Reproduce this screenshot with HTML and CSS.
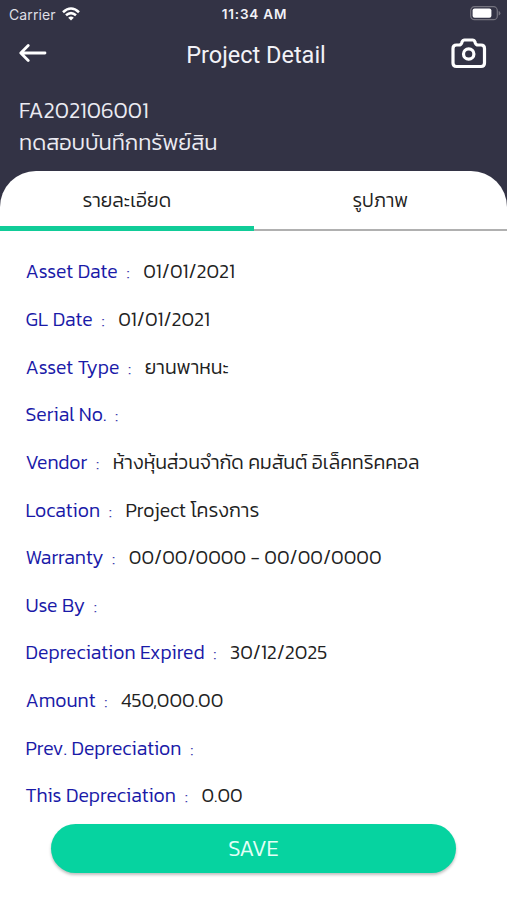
FILE: index.html
```html
<!DOCTYPE html>
<html lang="th">
<head>
<meta charset="utf-8">
<title>Project Detail</title>
<link rel="stylesheet" href="styles.css">
</head>
<body>
<header class="header">
  <div class="status">
    <div class="carrier"><span>Carrier</span>
      <svg width="18" height="14" viewBox="0 0 18 14" fill="none" stroke="#fff" stroke-width="2.6"><path d="M1 5.200Q9-2.200 17 5.200M4 8.300Q9 3.900 14 8.300"/><path d="M9 13.600L6.200 10.700Q9 8.300 11.800 10.700Z" fill="#fff" stroke="none"/></svg>
    </div>
    <span class="time">11:34 AM</span>
    <svg class="battery" width="31" height="15" viewBox="0 0 31 15"><rect x=".7" y=".7" width="26.6" height="13" rx="3.8" fill="none" stroke="#75747f" stroke-width="1.2"/><rect x="2.6" y="2.6" width="18.8" height="9.2" rx="2" fill="#fff"/><path d="M28.600 5v4.600q1.800-.6 1.800-2.300t-1.800-2.300z" fill="#75747f"/></svg>
  </div>
  <div class="nav">
    <svg class="back" width="28" height="20" viewBox="0 0 28 20" fill="none" stroke="#fff" stroke-width="2.8" stroke-linecap="round" stroke-linejoin="round"><path d="M26 10H2M9.200 2.600L1.800 10l7.400 7.400"/></svg>
    <h1>Project Detail</h1>
    <svg class="camera" width="36" height="32" viewBox="0 0 36 32" fill="none" stroke="#fff" stroke-width="3.2" stroke-linejoin="round"><path d="M5.500 7H8Q10 7 10.700 5L11 4Q11.800 2 13.500 2H21.500Q23.300 2 24 4L24.300 5Q25 7 27 7H30Q33.500 7 33.500 10.500V25Q33.500 28.500 30 28.500H5.500Q2 28.500 2 25V10.500Q2 7 5.500 7Z"/><circle cx="17.700" cy="16" r="5.200"/></svg>
  </div>
  <div class="asset">
    <div>FA202106001</div>
    <div>ทดสอบบันทึกทรัพย์สิน</div>
  </div>
</header>
<main class="sheet">
  <nav class="tabs">
    <div class="tab active"><span>รายละเอียด</span></div>
    <div class="tab"><span>รูปภาพ</span></div>
  </nav>
  <dl class="fields">
    <div class="row"><dt>Asset Date</dt><i>:</i><dd>01/01/2021</dd></div>
    <div class="row"><dt>GL Date</dt><i>:</i><dd>01/01/2021</dd></div>
    <div class="row"><dt>Asset Type</dt><i>:</i><dd>ยานพาหนะ</dd></div>
    <div class="row"><dt>Serial No.</dt><i>:</i></div>
    <div class="row"><dt>Vendor</dt><i>:</i><dd>ห้างหุ้นส่วนจำกัด คมสันต์ อิเล็คทริคคอล</dd></div>
    <div class="row"><dt>Location</dt><i>:</i><dd>Project โครงการ</dd></div>
    <div class="row"><dt>Warranty</dt><i>:</i><dd>00/00/0000 - 00/00/0000</dd></div>
    <div class="row"><dt>Use By</dt><i>:</i></div>
    <div class="row"><dt>Depreciation Expired</dt><i>:</i><dd>30/12/2025</dd></div>
    <div class="row"><dt>Amount</dt><i>:</i><dd>450,000.00</dd></div>
    <div class="row"><dt>Prev. Depreciation</dt><i>:</i></div>
    <div class="row"><dt>This Depreciation</dt><i>:</i><dd>0.00</dd></div>
  </dl>
  <button class="save">SAVE</button>
</main>
</body>
</html>
```
FILE: styles.css
```css
* { box-sizing: border-box; margin: 0; padding: 0; }
body { width: 507px; height: 900px; overflow: hidden; background: #333345; font-family: Kanit, "Noto Sans", "Noto Sans Thai", sans-serif; font-weight: 300; }
.header { height: 171px; color: #fff; }
.status { height: 28px; display: grid; grid-template-columns: 1fr auto 1fr; align-items: center; padding: 0 6px 0 9px; font-family: Inter, sans-serif; }
.carrier { display: flex; align-items: center; gap: 6px; font-size: 14px; font-weight: 400; color: #dfdfe6; letter-spacing: .1px; }
.time { font-size: 13.5px; font-weight: 600; letter-spacing: .8px; margin-left: -1px; color: #f2f2f7; }
.battery { justify-self: end; margin-top: -1px; }
.nav { height: 52px; display: grid; grid-template-columns: 60px 1fr 60px; align-items: center; padding: 0 20px 0 19px; }
.nav h1 { font: 400 23.5px Roboto, sans-serif; text-align: center; color: #f2f2f7; padding: 1px 0 0 6px; }
.camera { justify-self: end; }
.back { margin-top: -2px; }
.asset { padding: 15px 0 0 19px; font-size: 22px; line-height: 32px; color: #ebebf2; white-space: nowrap; }
.sheet { height: 729px; background: #fff; border-radius: 36px 36px 0 0; overflow: hidden; }
.tabs { display: grid; grid-template-columns: 1fr 1fr; height: 60px; }
.tab { display: flex; justify-content: center; align-items: center; font-size: 19px; color: #222; border-bottom: 2px solid #b0b0b0; }
.tab.active { font-size: 19.5px; border-bottom: 5px solid #11cc98; padding-top: 3px; }
.fields { padding: 17.5px 0 0 25.5px; }
.row { height: 47.65px; display: flex; align-items: center; font-size: 19.5px; line-height: 26px; white-space: nowrap; }
.row dt { color: #1a1aa8; }
.row i { font-style: normal; color: #3c3cae; margin-left: 8.5px; width: 17px; font-size: 21px; }
.row dd { color: #222; }
.save { display: block; width: 405px; height: 49px; margin: 3.500px 0 0 51px; padding-top: 1px; border: 0; border-radius: 25px; background: #06d3a0; color: #e4fff7; font: 300 22px Kanit, sans-serif; box-shadow: 0 2px 3px rgba(0,0,0,.25); }
```
